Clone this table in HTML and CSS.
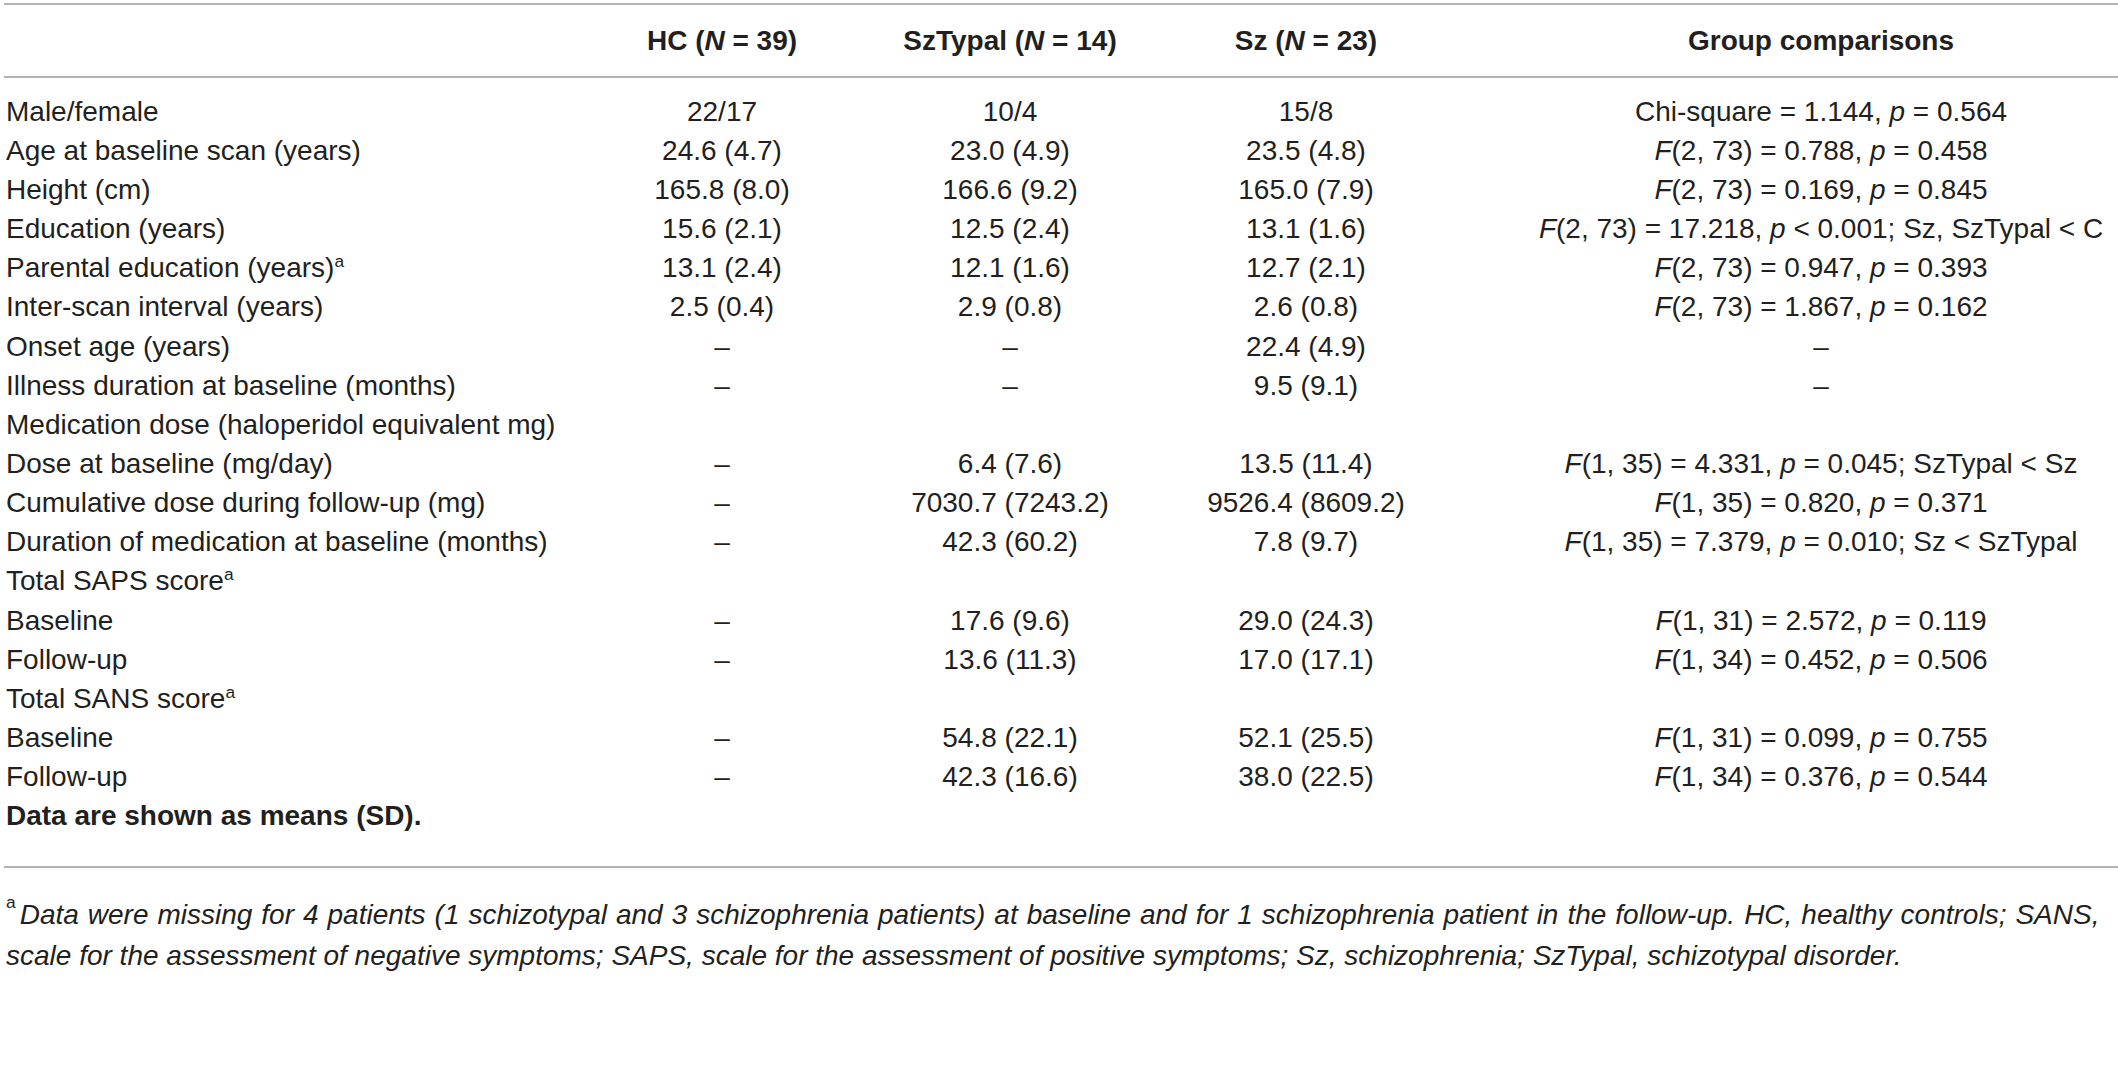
FILE: index.html
```html
<!DOCTYPE html>
<html lang="en">
<head>
<meta charset="utf-8">
<title>Demographic and clinical characteristics</title>
<link rel="stylesheet" href="styles.css">
</head>
<body>
<div class="table">
  <div class="row head">
    <div class="cell label"></div>
    <div class="cell">HC (<i>N</i> = 39)</div>
    <div class="cell">SzTypal (<i>N</i> = 14)</div>
    <div class="cell">Sz (<i>N</i> = 23)</div>
    <div class="cell gc">Group comparisons</div>
  </div>
  <div class="body">
    <div class="row">
      <div class="cell label">Male/female</div>
      <div class="cell">22/17</div><div class="cell">10/4</div><div class="cell">15/8</div>
      <div class="cell gc">Chi-square = 1.144, <i>p</i> = 0.564</div>
    </div>
    <div class="row">
      <div class="cell label">Age at baseline scan (years)</div>
      <div class="cell">24.6 (4.7)</div><div class="cell">23.0 (4.9)</div><div class="cell">23.5 (4.8)</div>
      <div class="cell gc"><i>F</i>(2, 73) = 0.788, <i>p</i> = 0.458</div>
    </div>
    <div class="row">
      <div class="cell label">Height (cm)</div>
      <div class="cell">165.8 (8.0)</div><div class="cell">166.6 (9.2)</div><div class="cell">165.0 (7.9)</div>
      <div class="cell gc"><i>F</i>(2, 73) = 0.169, <i>p</i> = 0.845</div>
    </div>
    <div class="row">
      <div class="cell label">Education (years)</div>
      <div class="cell">15.6 (2.1)</div><div class="cell">12.5 (2.4)</div><div class="cell">13.1 (1.6)</div>
      <div class="cell gc"><i>F</i>(2, 73) = 17.218, <i>p</i> &lt; 0.001; Sz, SzTypal &lt; C</div>
    </div>
    <div class="row">
      <div class="cell label">Parental education (years)<sup>a</sup></div>
      <div class="cell">13.1 (2.4)</div><div class="cell">12.1 (1.6)</div><div class="cell">12.7 (2.1)</div>
      <div class="cell gc"><i>F</i>(2, 73) = 0.947, <i>p</i> = 0.393</div>
    </div>
    <div class="row">
      <div class="cell label">Inter-scan interval (years)</div>
      <div class="cell">2.5 (0.4)</div><div class="cell">2.9 (0.8)</div><div class="cell">2.6 (0.8)</div>
      <div class="cell gc"><i>F</i>(2, 73) = 1.867, <i>p</i> = 0.162</div>
    </div>
    <div class="row">
      <div class="cell label">Onset age (years)</div>
      <div class="cell">–</div><div class="cell">–</div><div class="cell">22.4 (4.9)</div>
      <div class="cell gc">–</div>
    </div>
    <div class="row">
      <div class="cell label">Illness duration at baseline (months)</div>
      <div class="cell">–</div><div class="cell">–</div><div class="cell">9.5 (9.1)</div>
      <div class="cell gc">–</div>
    </div>
    <div class="row">
      <div class="cell label span">Medication dose (haloperidol equivalent mg)</div>
    </div>
    <div class="row">
      <div class="cell label">Dose at baseline (mg/day)</div>
      <div class="cell">–</div><div class="cell">6.4 (7.6)</div><div class="cell">13.5 (11.4)</div>
      <div class="cell gc"><i>F</i>(1, 35) = 4.331, <i>p</i> = 0.045; SzTypal &lt; Sz</div>
    </div>
    <div class="row">
      <div class="cell label">Cumulative dose during follow-up (mg)</div>
      <div class="cell">–</div><div class="cell">7030.7 (7243.2)</div><div class="cell">9526.4 (8609.2)</div>
      <div class="cell gc"><i>F</i>(1, 35) = 0.820, <i>p</i> = 0.371</div>
    </div>
    <div class="row">
      <div class="cell label">Duration of medication at baseline (months)</div>
      <div class="cell">–</div><div class="cell">42.3 (60.2)</div><div class="cell">7.8 (9.7)</div>
      <div class="cell gc"><i>F</i>(1, 35) = 7.379, <i>p</i> = 0.010; Sz &lt; SzTypal</div>
    </div>
    <div class="row">
      <div class="cell label span">Total SAPS score<sup>a</sup></div>
    </div>
    <div class="row">
      <div class="cell label">Baseline</div>
      <div class="cell">–</div><div class="cell">17.6 (9.6)</div><div class="cell">29.0 (24.3)</div>
      <div class="cell gc"><i>F</i>(1, 31) = 2.572, <i>p</i> = 0.119</div>
    </div>
    <div class="row">
      <div class="cell label">Follow-up</div>
      <div class="cell">–</div><div class="cell">13.6 (11.3)</div><div class="cell">17.0 (17.1)</div>
      <div class="cell gc"><i>F</i>(1, 34) = 0.452, <i>p</i> = 0.506</div>
    </div>
    <div class="row">
      <div class="cell label span">Total SANS score<sup>a</sup></div>
    </div>
    <div class="row">
      <div class="cell label">Baseline</div>
      <div class="cell">–</div><div class="cell">54.8 (22.1)</div><div class="cell">52.1 (25.5)</div>
      <div class="cell gc"><i>F</i>(1, 31) = 0.099, <i>p</i> = 0.755</div>
    </div>
    <div class="row">
      <div class="cell label">Follow-up</div>
      <div class="cell">–</div><div class="cell">42.3 (16.6)</div><div class="cell">38.0 (22.5)</div>
      <div class="cell gc"><i>F</i>(1, 34) = 0.376, <i>p</i> = 0.544</div>
    </div>
    <div class="row">
      <div class="cell label span note">Data are shown as means (SD).</div>
    </div>
  </div>
  <div class="foot">
    <p class="fn-line first"><sup class="mark">a</sup><span>Data were missing for 4 patients (1 schizotypal and 3 schizophrenia patients) at baseline and for 1 schizophrenia patient in the follow-up. HC, healthy controls; SANS,</span></p>
    <p class="fn-line">scale for the assessment of negative symptoms; SAPS, scale for the assessment of positive symptoms; Sz, schizophrenia; SzTypal, schizotypal disorder.</p>
  </div>
</div>
</body>
</html>
```

FILE: styles.css
```css
html, body {
  margin: 0;
  padding: 0;
  background: #ffffff;
  overflow: hidden;
}

body {
  font-family: "Liberation Sans", Arial, sans-serif;
  font-size: 28px;
  color: #231f20;
}

.table {
  margin: 3px 0 0 4px;
  width: 2114px;
}

.row {
  display: grid;
  grid-template-columns: 576px 284px 292px 300px 1fr;
  align-items: center;
  height: 39.17px;
}

.cell {
  text-align: center;
  white-space: nowrap;
}

.cell.label {
  text-align: left;
  padding-left: 2px;
}

.cell.span {
  grid-column: 1 / -1;
}

.cell.gc {
  padding-left: 68px;
}

.head {
  height: 71px;
  border-top: 2px solid #b4b4b4;
  border-bottom: 2px solid #b4b4b4;
  font-weight: bold;
}

.body {
  padding: 14px 0 30px;
  border-bottom: 2px solid #b4b4b4;
}

.note {
  font-weight: bold;
}

sup {
  font-size: 0.62em;
  line-height: 0;
  vertical-align: 0.55em;
}

.foot {
  padding-top: 26px;
}

.fn-line {
  margin: 0;
  padding-left: 2px;
  font-style: italic;
  line-height: 41px;
  white-space: nowrap;
}

.fn-line.first {
  word-spacing: 1.2px;
}

.fn-line .mark {
  font-style: normal;
  line-height: 1;
  vertical-align: top;
  padding-right: 4px;
}
```
